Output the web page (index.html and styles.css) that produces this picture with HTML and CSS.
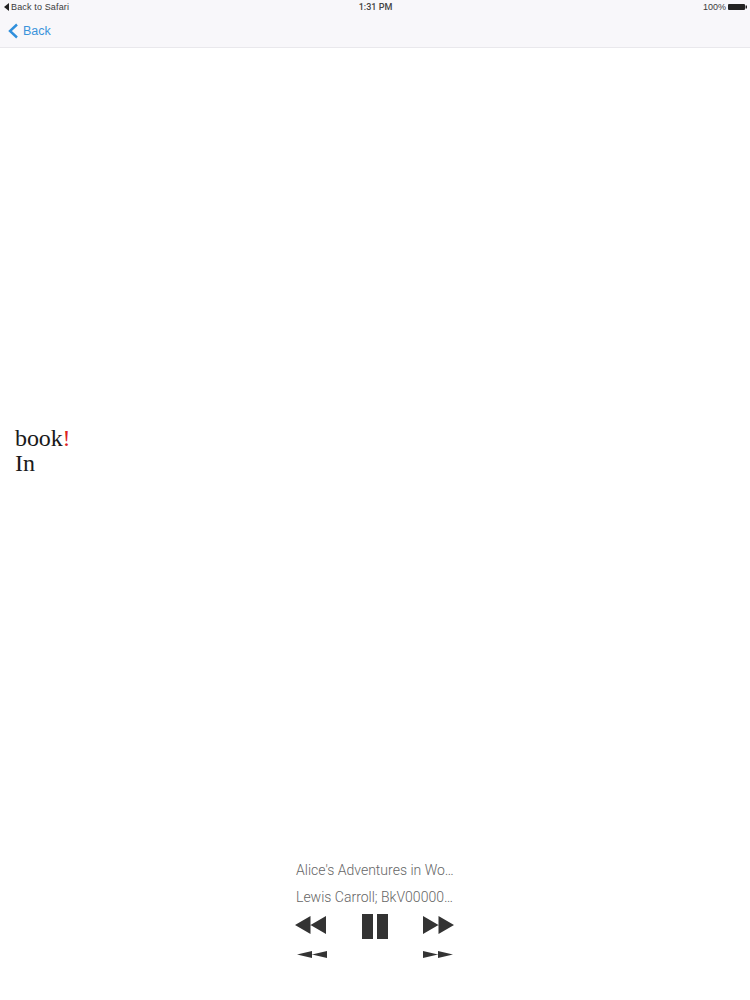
FILE: index.html
```html
<!DOCTYPE html>
<html lang="en">
<head>
<meta charset="utf-8">
<title>Reader</title>
<link rel="stylesheet" href="styles.css">
</head>
<body>
<div class="page">
  <header class="top">
    <div class="status">
      <div class="status-left">
        <svg class="back-tri" width="5" height="8" viewBox="0 0 5 8"><path d="M5 0V8L0 4Z"/></svg>
        <span>Back to Safari</span>
      </div>
      <div class="status-time">1:31 PM</div>
      <div class="status-right">
        <span>100%</span>
        <svg class="battery" width="19" height="6" viewBox="0 0 19 6"><rect x="0" y="0" width="17" height="6" rx="1"/><rect x="17.500" y="1.500" width="1.500" height="3"/></svg>
      </div>
    </div>
    <nav class="nav">
      <svg class="chevron" width="11" height="16" viewBox="0 0 11 16"><path d="M10 1.500L3 8L10 14.500" fill="none" stroke="#2f8fdc" stroke-width="2.400"/></svg>
      <span>Back</span>
    </nav>
  </header>
  <main class="reader">
    <p class="text">book<span class="mark">!</span><br>In</p>
  </main>
  <footer class="player">
    <div class="line">Alice's Adventures in Wo…</div>
    <div class="line second">Lewis Carroll; BkV00000…</div>
    <div class="row big">
      <svg class="skip" width="31" height="18" viewBox="0 0 31 18"><path d="M15.500 0V18L0 9ZM31 0V18L15.500 9Z"/></svg>
      <svg width="26" height="25" viewBox="0 0 26 25"><rect width="11" height="25"/><rect x="15" width="11" height="25"/></svg>
      <svg class="skip" width="31" height="18" viewBox="0 0 31 18"><path d="M0 0V18L15.500 9ZM15.500 0V18L31 9Z"/></svg>
    </div>
    <div class="row small">
      <svg width="30" height="7" viewBox="0 0 30 7"><path d="M15 0V7L0 3.500ZM30 0V7L15 3.500Z"/></svg>
      <svg width="30" height="7" viewBox="0 0 30 7"><path d="M0 0V7L15 3.500ZM15 0V7L30 3.500Z"/></svg>
    </div>
  </footer>
</div>
</body>
</html>
```

FILE: styles.css
```css
html, body { margin: 0; padding: 0; background: #fff; }
.page { width: 750px; height: 1000px; display: flex; flex-direction: column; overflow: hidden; font-family: "Liberation Sans", Arial, sans-serif; }
.top { height: 47px; background: #f8f7fa; border-bottom: 1px solid #e9e8ec; flex: none; }
.status { display: grid; grid-template-columns: 1fr auto 1fr; align-items: center; height: 14px; font-size: 9px; color: #3a3a3a; padding: 0 3px 0 4px; }
.status-left { display: flex; align-items: center; gap: 2px; letter-spacing: 0.15px; }
.back-tri { fill: #222; }
.status-time { font-family: Roboto, sans-serif; font-weight: 500; color: #444; }
.status-right { display: flex; justify-content: flex-end; align-items: center; gap: 2px; }
.battery { fill: #222; }
.nav { display: flex; align-items: center; gap: 5px; height: 33px; padding-left: 7px; color: #3b93da; font-size: 12.5px; }
.reader { flex: 1; display: flex; flex-direction: column; justify-content: center; padding: 0 15px 3px; min-height: 0; }
.text { margin: 0; font-family: "Liberation Serif", serif; font-size: 24px; line-height: 25px; color: #1a1a1a; letter-spacing: -0.1px; }
.mark { color: #d22; }
.player { flex: none; height: 143px; display: flex; flex-direction: column; align-items: center; }
.line { width: 157px; height: 27px; line-height: 27px; font-family: Roboto, sans-serif; font-size: 14px; font-weight: 300; color: #666; white-space: nowrap; margin-left: -1px; }
.row { display: flex; justify-content: space-between; align-items: center; fill: #333; }
.big { width: 159px; height: 30px; margin-left: -1px; }
.skip { margin-bottom: 3px; }
.small { width: 156px; height: 27px; margin-left: -1px; }
```
